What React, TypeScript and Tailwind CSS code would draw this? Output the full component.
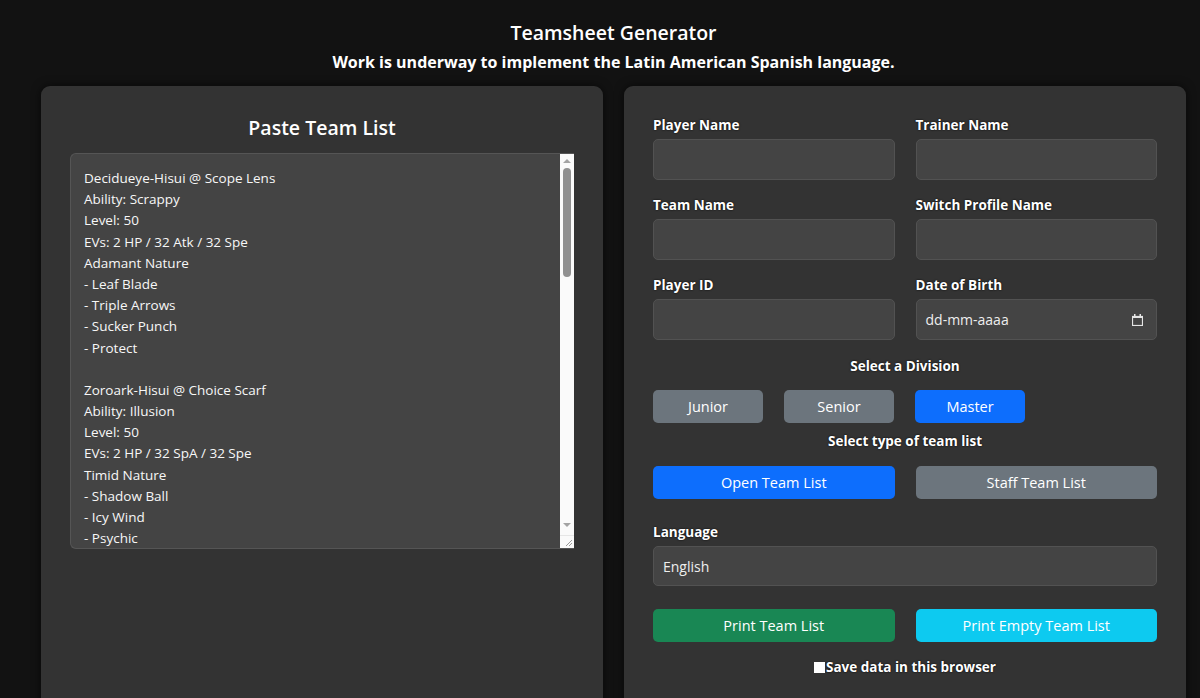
const teamList = [
  'Decidueye-Hisui @ Scope Lens',
  'Ability: Scrappy',
  'Level: 50',
  'EVs: 2 HP / 32 Atk / 32 Spe',
  'Adamant Nature',
  '- Leaf Blade',
  '- Triple Arrows',
  '- Sucker Punch',
  '- Protect',
  '',
  'Zoroark-Hisui @ Choice Scarf',
  'Ability: Illusion',
  'Level: 50',
  'EVs: 2 HP / 32 SpA / 32 Spe',
  'Timid Nature',
  '- Shadow Ball',
  '- Icy Wind',
  '- Psychic',
];

function Field({ label, children }: { label: string; children?: React.ReactNode }) {
  return (
    <div className="flex flex-col">
      <label className="text-[13.5px] leading-[20px] font-bold text-white mb-[4px] [text-shadow:0_0_2px_#000]">{label}</label>
      {children ?? (
        <input className="h-[41px] rounded-[5px] border border-[#525252] bg-[#444444] px-[10px] text-white outline-none" />
      )}
    </div>
  );
}

function Btn({ label, color, className = '' }: { label: string; color: string; className?: string }) {
  return (
    <button className={`h-[33px] rounded-[5px] text-[14.5px] text-white ${color} ${className}`}>{label}</button>
  );
}

export default function App() {
  return (
    <div
      className="min-h-[698px] bg-[#121212] pl-[41px] pr-[14px] text-white"
      style={{ fontFamily: '"Open Sans", "Noto Sans", sans-serif' }}
    >
      {/* Header */}
      <div className="pt-[19px] pb-[12px] text-center">
        <h1 className="text-[19.5px] leading-[28px] font-semibold">Teamsheet Generator</h1>
        <p className="mt-[3px] text-[16px] leading-[24px] font-bold">
          Work is underway to implement the Latin American Spanish language.
        </p>
      </div>

      <div className="grid grid-cols-2 gap-[21px]">
        {/* Team list panel */}
        <div className="h-[640px] rounded-t-[9px] bg-[#333333] px-[29px] pt-[28px] shadow-[0_0_10px_rgba(0,0,0,0.6)]">
          <h2 className="text-center text-[19.5px] leading-[28px] font-semibold">Paste Team List</h2>
          <div className="mt-[11px] flex h-[396px] overflow-hidden rounded-l-[6px] border border-r-0 border-[#555555] bg-[#444444]">
            <div className="flex-1 overflow-hidden p-[13px] pt-[14px] text-[13.5px] leading-[21.2px] text-[#f7f7f7]">
              {teamList.map((line, i) => (
                <div key={i} className="h-[21.2px] whitespace-pre">{line}</div>
              ))}
            </div>
            {/* scrollbar */}
            <div className="flex w-[14px] flex-col items-center bg-[#fafafa] -mt-px">
              <div className="mt-[6px] h-0 w-0 border-x-[4px] border-b-[4px] border-x-transparent border-b-[#a3a3a3]" />
              <div className="mt-[5px] h-[109px] w-[8px] rounded-full bg-[#909090]" />
              <div className="flex-1" />
              <div className="mb-[8px] h-0 w-0 border-x-[4px] border-t-[4px] border-x-transparent border-t-[#a3a3a3]" />
              <div className="flex h-[13px] w-full items-end justify-end border-t border-[#e6e6e6] bg-[#fafafa] pr-px pb-px">
                <svg width="9" height="9" viewBox="0 0 9 9">
                  <path d="M8 2L2 8M8 5L5 8" stroke="#9a9a9a" strokeWidth="1" />
                </svg>
              </div>
            </div>
          </div>
        </div>

        {/* Form panel */}
        <div className="h-[640px] rounded-t-[9px] bg-[#333333] px-[29px] pt-[29px] shadow-[0_0_10px_rgba(0,0,0,0.6)]">
          <div className="grid grid-cols-2 gap-x-[21px] gap-y-[15px]">
            <Field label="Player Name" />
            <Field label="Trainer Name" />
            <Field label="Team Name" />
            <Field label="Switch Profile Name" />
            <Field label="Player ID" />
            <Field label="Date of Birth">
              <div className="flex h-[41px] items-center justify-between rounded-[5px] border border-[#525252] bg-[#444444] pl-[9px] pr-[13px] text-[14px] text-[#eeeeee]">
                <span>dd-mm-aaaa</span>
                <svg width="11" height="12" viewBox="0 0 11 12">
                  <rect x="0.5" y="2.5" width="10" height="9" fill="none" stroke="#e5e5e5" strokeWidth="1.2" />
                  <rect x="0.5" y="2" width="10" height="2" fill="#e5e5e5" />
                  <rect x="2" y="0" width="1.5" height="3" fill="#e5e5e5" />
                  <rect x="7.5" y="0" width="1.5" height="3" fill="#e5e5e5" />
                </svg>
              </div>
            </Field>
          </div>

          <p className="mt-[16px] text-center text-[13.5px] leading-[20px] font-bold [text-shadow:0_0_2px_#000]">Select a Division</p>
          <div className="mt-[14px] flex gap-[21px]">
            <Btn label="Junior" color="bg-[#6c757d]" className="w-[110px]" />
            <Btn label="Senior" color="bg-[#6c757d]" className="w-[110px]" />
            <Btn label="Master" color="bg-[#0d6efd]" className="w-[110px]" />
          </div>

          <p className="mt-[8px] text-center text-[13.5px] leading-[20px] font-bold [text-shadow:0_0_2px_#000]">Select type of team list</p>
          <div className="mt-[15px] grid grid-cols-2 gap-[21px]">
            <Btn label="Open Team List" color="bg-[#0d6efd]" />
            <Btn label="Staff Team List" color="bg-[#6c757d]" />
          </div>

          <div className="mt-[23px] flex flex-col">
            <label className="mb-[4px] text-[13.5px] leading-[20px] font-bold [text-shadow:0_0_2px_#000]">Language</label>
            <select className="h-[40px] appearance-none rounded-[5px] border border-[#525252] bg-[#444444] px-[9px] text-[14px] text-[#eeeeee] outline-none">
              <option>English</option>
              <option>Español</option>
            </select>
          </div>

          <div className="mt-[23px] grid grid-cols-2 gap-[21px]">
            <Btn label="Print Team List" color="bg-[#198754]" />
            <Btn label="Print Empty Team List" color="bg-[#0dcaf0]" />
          </div>

          <div className="mt-[15px] flex items-center justify-center text-[13.5px] leading-[20px] font-bold [text-shadow:0_0_2px_#000]">
            <span className="mr-[1px] inline-block h-[11px] w-[11px] bg-white" />
            <span>Save data in this browser</span>
          </div>
        </div>
      </div>
    </div>
  );
}
